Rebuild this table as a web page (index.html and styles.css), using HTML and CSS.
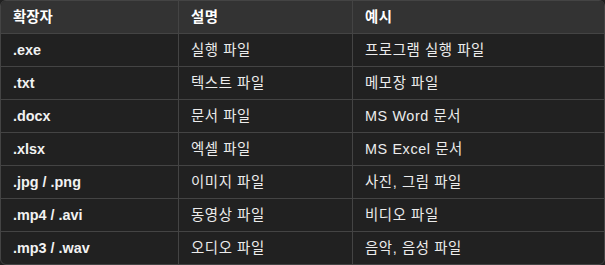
FILE: index.html
```html
<!DOCTYPE html>
<html lang="ko">
<head>
<meta charset="utf-8">
<link rel="stylesheet" href="styles.css">
</head>
<body>
<div class="wrap">
<table class="tbl">
<colgroup><col class="c1"><col class="c2"><col class="c3"></colgroup>
<thead>
<tr><th>확장자</th><th>설명</th><th>예시</th></tr>
</thead>
<tbody>
<tr><td class="ext">.exe</td><td>실행 파일</td><td>프로그램 실행 파일</td></tr>
<tr><td class="ext">.txt</td><td>텍스트 파일</td><td>메모장 파일</td></tr>
<tr><td class="ext">.docx</td><td>문서 파일</td><td>MS Word 문서</td></tr>
<tr><td class="ext">.xlsx</td><td>엑셀 파일</td><td>MS Excel 문서</td></tr>
<tr><td class="ext">.jpg / .png</td><td>이미지 파일</td><td>사진, 그림 파일</td></tr>
<tr><td class="ext">.mp4 / .avi</td><td>동영상 파일</td><td>비디오 파일</td></tr>
<tr><td class="ext">.mp3 / .wav</td><td>오디오 파일</td><td>음악, 음성 파일</td></tr>
</tbody>
</table>
</div>
</body>
</html>
```
FILE: styles.css
```css
html, body {
  margin: 0;
  padding: 0;
  background: #212121;
}
.wrap {
  width: 603px;
  border: 1px solid #444444;
  border-radius: 6px;
  overflow: hidden;
  background: #212121;
}
.tbl {
  width: 100%;
  border-collapse: separate;
  border-spacing: 0;
  table-layout: fixed;
  font-family: "Liberation Sans", "Noto Sans CJK KR", sans-serif;
  font-size: 14.4px;
  color: #ececec;
}
.c1 { width: 178px; }
.c2 { width: 174px; }
.tbl th, .tbl td {
  height: 32px;
  padding: 0 12px;
  line-height: 16px;
  text-align: left;
  vertical-align: middle;
  border-bottom: 1px solid #444444;
  border-right: 1px solid #444444;
  box-sizing: content-box;
  white-space: nowrap;
}
.tbl td + td, .tbl th + th { letter-spacing: 0.6px; }
.tbl th:last-child, .tbl td:last-child { border-right: none; }
.tbl tbody tr:last-child td { border-bottom: none; }
.tbl th {
  background: #333333;
  font-weight: bold;
  color: #ffffff;
}
.tbl td.ext {
  font-weight: bold;
  color: #f2f2f2;
}
```
